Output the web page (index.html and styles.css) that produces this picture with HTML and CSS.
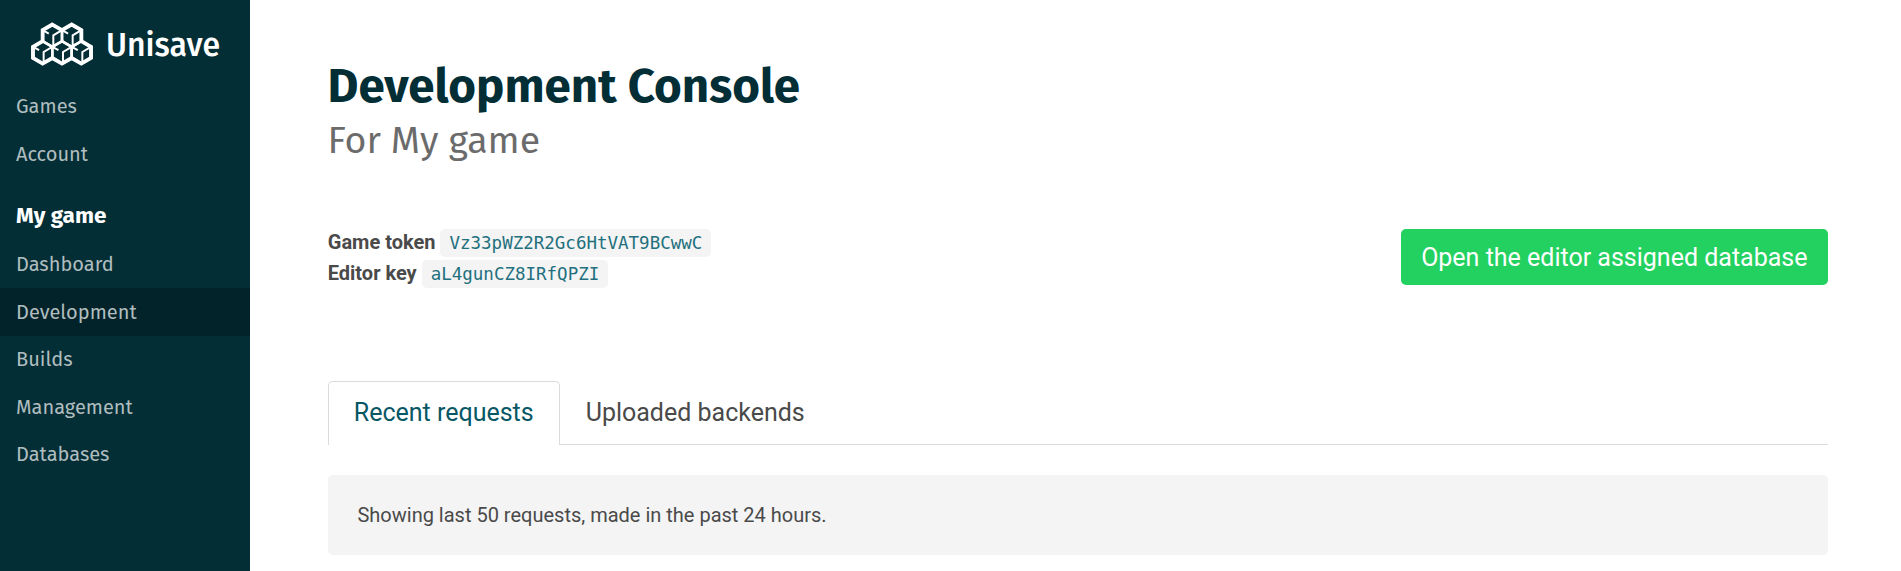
FILE: index.html
```html
<!DOCTYPE html>
<html lang="en">
<head>
<meta charset="utf-8">
<title>Development Console</title>
<link rel="stylesheet" href="styles.css">
</head>
<body>
<div class="layout">
  <aside class="sidebar">
    <a class="brand">
      <svg class="brand-logo" width="64" height="46" viewBox="-0.4 -0.3 64.8 46.6">
        <defs>
          <g id="cube">
            <path class="edge" d="M0-11.3L9.8-5.65V5.65L0 11.3L-9.8 5.65V-5.65Z"/>
            <path class="inner" d="M9.8-5.65L1 -0.4V11.3M-9.8-5.65L-3.6-2.2"/>
          </g>
        </defs>
        <use href="#cube" x="22.2" y="14.6"/>
        <use href="#cube" x="41.8" y="14.6"/>
        <use href="#cube" x="12.4" y="31.5"/>
        <use href="#cube" x="32" y="31.5"/>
        <use href="#cube" x="51.6" y="31.5"/>
        <path class="outline" d="M22.2 3.3L32 8.95L41.8 3.3L51.6 8.95V20.2L61.4 25.85V37.15L51.6 42.8L41.8 37.15L32 42.8L22.2 37.15L12.4 42.8L2.6 37.15V25.85L12.4 20.2V8.95Z"/>
      </svg>
      <span class="brand-name">Unisave</span>
    </a>
    <nav class="menu">
      <a class="menu-item games">Games</a>
      <a class="menu-item account">Account</a>
    </nav>
    <h2 class="menu-title">My game</h2>
    <nav class="menu">
      <a class="menu-item dashboard">Dashboard</a>
      <a class="menu-item development active">Development</a>
      <a class="menu-item builds">Builds</a>
      <a class="menu-item management">Management</a>
      <a class="menu-item databases">Databases</a>
    </nav>
  </aside>
  <main class="content">
    <h1 class="title">Development Console</h1>
    <p class="subtitle">For My game</p>
    <div class="level">
      <div class="tokens">
        <div class="token"><strong>Game token</strong> <code>Vz33pWZ2R2Gc6HtVAT9BCwwC</code></div>
        <div class="token"><strong>Editor key</strong> <code>aL4gunCZ8IRfQPZI</code></div>
      </div>
      <a class="button">Open the editor assigned database</a>
    </div>
    <div class="tabs">
      <a class="tab selected">Recent requests</a>
      <a class="tab">Uploaded backends</a>
    </div>
    <div class="message">Showing last 50 requests, made in the past 24 hours.</div>
  </main>
</div>
</body>
</html>
```
FILE: styles.css
```css
* { box-sizing: border-box; }
body {
  margin: 0;
  font: 20px/30px Roboto, sans-serif;
  color: #4a4a4a;
  background: #fff;
  overflow: hidden;
}
.layout { display: flex; height: 571px; }
.sidebar {
  width: 250px;
  flex: none;
  background: #032e36;
  color: #fff;
  font-family: "Fira Sans", "Noto Sans", sans-serif;
}
.brand {
  display: flex;
  align-items: center;
  height: 82px;
  padding: 5px 0 0 30px;
}
.brand-logo { fill: none; stroke: #fff; flex: none; }
.edge { stroke-width: 2.6; }
.inner { stroke-width: 2; }
.outline { stroke-width: 3.9; }
.brand-name {
  margin-left: 12px;
  padding-top: 2px;
  font-size: 32px;
  font-weight: 500;
}
.menu { display: flex; flex-direction: column; }
.menu-item {
  height: 47.5px;
  line-height: 48px;
  padding-left: 16px;
  font-size: 20px;
  color: #b0bdbf;
}
.active {
  height: 48px;
  margin-bottom: -0.5px;
  background: #03232a;
}
.menu-title {
  margin: 15.2px 0 0;
  height: 48.2px;
  line-height: 48px;
  padding-left: 16px;
  font-size: 22.5px;
  font-weight: 700;
}
.content { width: 1500px; margin-left: 77.75px; }
.title, .subtitle { font-family: "Fira Sans", "Noto Sans", sans-serif; }
.title {
  margin: 59px 0 0 -0.3px;
  font-size: 47.5px;
  line-height: 56px;
  font-weight: 700;
  color: #032e36;
}
.subtitle {
  margin: 0 0 0 -0.3px;
  font-size: 37.5px;
  line-height: 52px;
  color: #6b6b6b;
}
.level {
  display: flex;
  justify-content: space-between;
  align-items: flex-start;
  margin-top: 62px;
  height: 152px;
}
.token { height: 31px; line-height: 26px; white-space: nowrap; }
strong { font-weight: 700; }
code {
  display: inline-block;
  height: 28px;
  padding: 0 9px;
  border-radius: 5px;
  background: #f4f4f4;
  color: #22707d;
  font: 17.5px/28px "DejaVu Sans Mono", monospace;
}
.button {
  height: 56px;
  padding: 0 20.25px;
  border-radius: 5px;
  background: #23d160;
  color: #fff;
  font-size: 25px;
  line-height: 57px;
}
.tabs {
  display: flex;
  height: 64px;
  font-size: 25px;
  line-height: 62px;
  box-shadow: inset 0 -1px #dbdbdb;
}
.tab { padding: 1px 26px 0; }
.selected {
  padding: 0 25px;
  border: 1px solid #dbdbdb;
  border-bottom: 0;
  border-radius: 5px 5px 0 0;
  background: #fff;
  color: #085765;
}
.message {
  height: 80px;
  margin-top: 30px;
  padding: 0 29.7px;
  border-radius: 5px;
  background: #f4f4f4;
  line-height: 80px;
}
```
